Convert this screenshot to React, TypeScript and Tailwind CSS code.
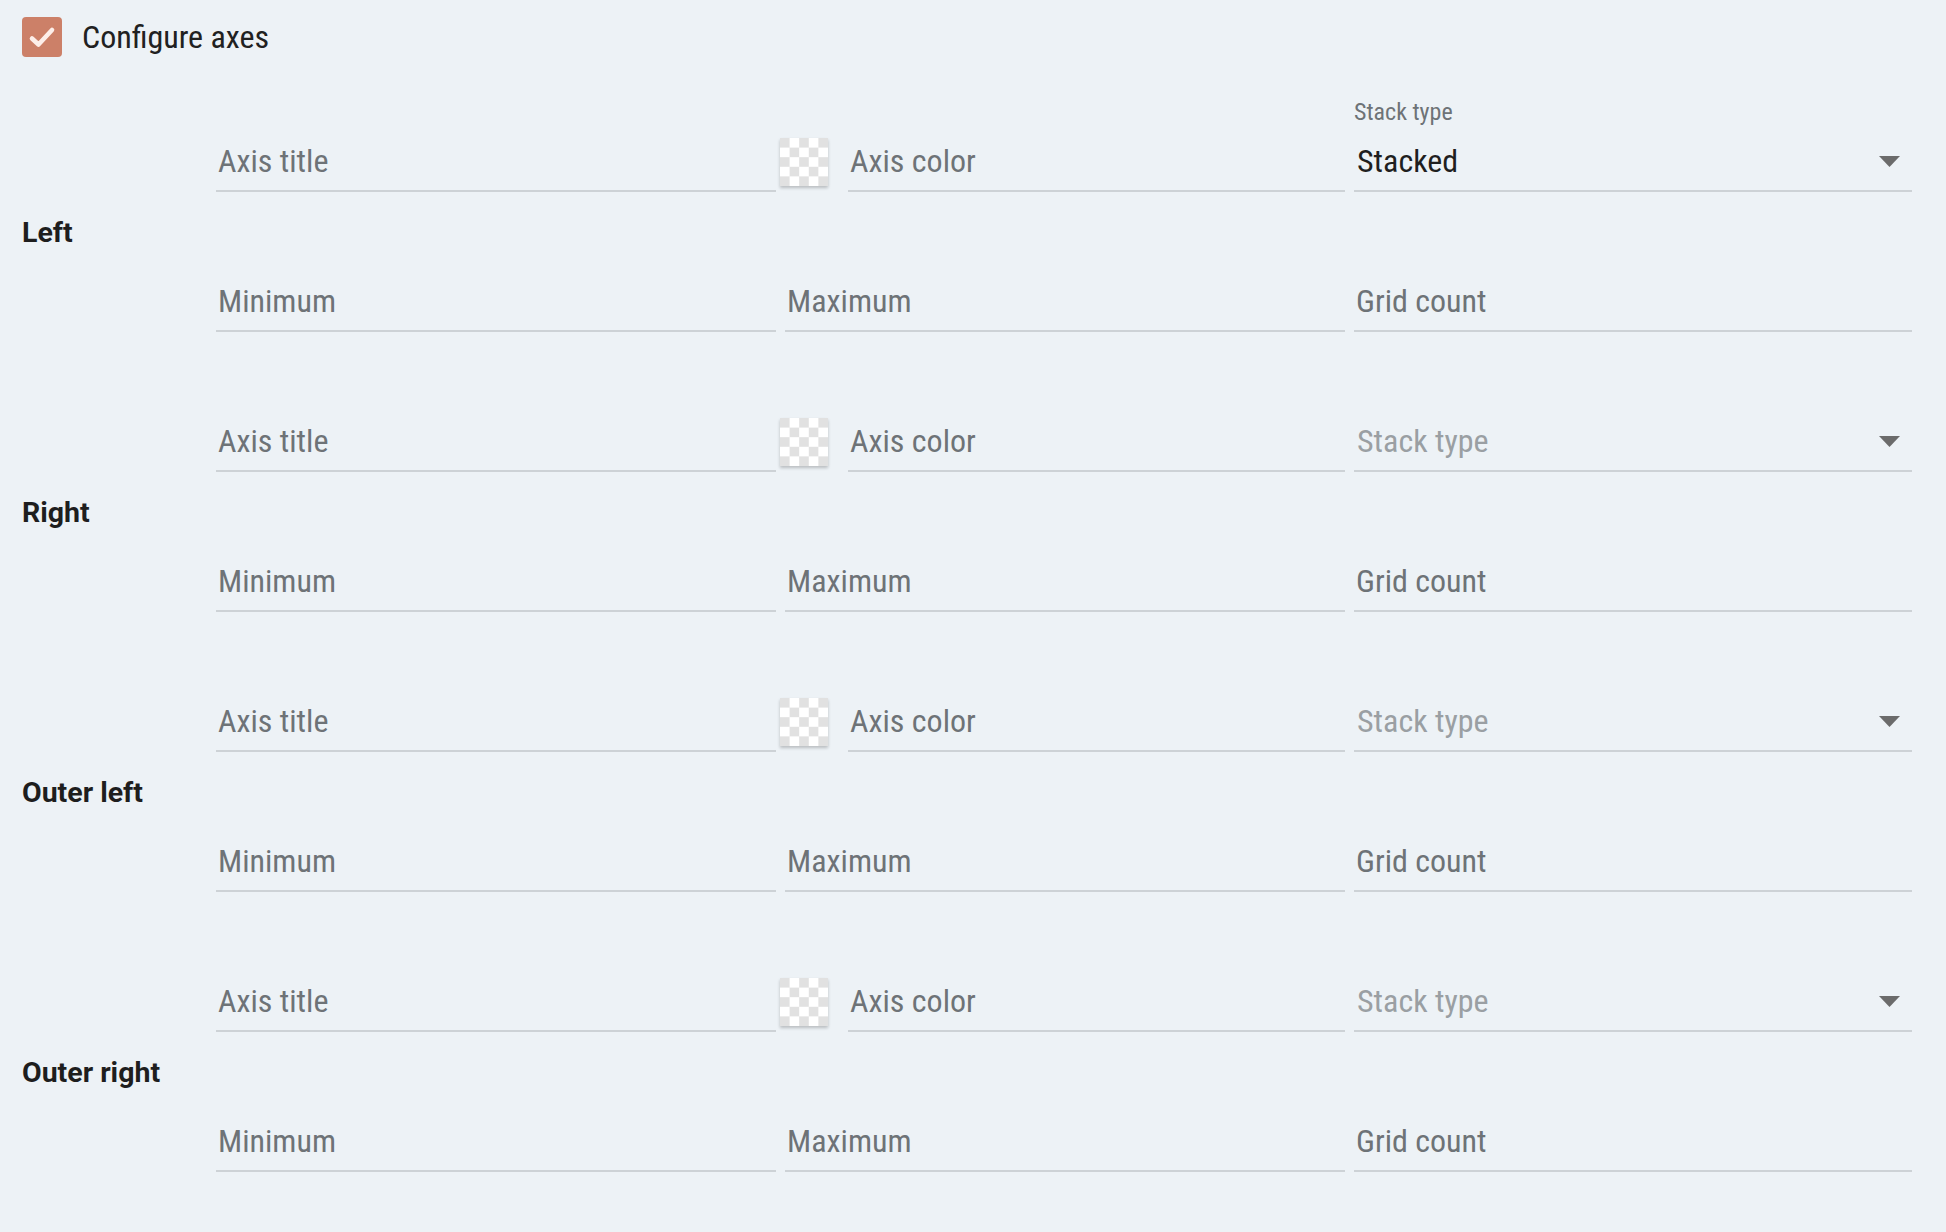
import { useState } from 'react';

type AxisGroup = {
  name: string;
  stackType?: string;
};

const axes: AxisGroup[] = [
  { name: 'Left', stackType: 'Stacked' },
  { name: 'Right' },
  { name: 'Outer left' },
  { name: 'Outer right' },
];

const CheckBox = ({ checked, onToggle }: { checked: boolean; onToggle: () => void }) => (
  <button
    type="button"
    onClick={onToggle}
    className={`flex h-[40px] w-[40px] items-center justify-center rounded-[4px] ${
      checked ? 'bg-[#cc8068]' : 'border-2 border-[#8a8f94] bg-transparent'
    }`}>
    {checked && (
      <svg width="40" height="40" viewBox="0 0 40 40" fill="none">
        <path
          d="M10 21.5l6.5 6L30 13"
          stroke="#fdeee9"
          strokeWidth="4.6"
          strokeLinecap="round"
          strokeLinejoin="round"
        />
      </svg>
    )}
  </button>
);

// underline input, optional floating label above
const Field = ({ placeholder, value, label, muted }: { placeholder: string; value?: string; label?: string; muted?: boolean }) => (
  <div className="flex h-[140px] min-w-0 flex-1 flex-col">
    <div className="h-[28px] pl-[1px] text-[24px] leading-[28px] text-[#6e7377]">{value ? label : ''}</div>
    <div className="flex h-[66px] items-start border-b-2 border-[#cdd2d6] pt-[15px]">
      <span
        className={`pl-[2px] text-[32px] leading-[40px] ${
          value ? 'text-[#1f1f1f]' : muted ? 'text-[#9a9fa3]' : 'text-[#6e7377]'
        }`}>
        {value ?? placeholder}
      </span>
    </div>
  </div>
);

const SelectField = ({ value }: { value?: string }) => (
  <div className="flex h-[140px] min-w-0 flex-col">
    <div className="h-[28px] text-[24px] leading-[28px] text-[#6e7377]">{value ? 'Stack type' : ''}</div>
    <div className="flex h-[66px] items-start border-b-2 border-[#cdd2d6] pt-[15px]">
      <div className="flex h-[40px] flex-1 items-center justify-between pr-[12px]">
        <span className={`pl-[3px] text-[32px] leading-[40px] ${value ? 'text-[#1f1f1f]' : 'text-[#9a9fa3]'}`}>
          {value ?? 'Stack type'}
        </span>
        <svg width="21" height="11" viewBox="0 0 21 11">
          <path d="M0 0h21L10.5 11z" fill="#6b6b6b" />
        </svg>
      </div>
    </div>
  </div>
);

const ColorField = () => (
  <div className="flex h-[140px] min-w-0 flex-col">
    <div className="h-[28px]" />
    <div className="flex h-[66px] items-start">
      <div className="ml-[-5px] mt-[12px] h-[48px] w-[48px] shrink-0 bg-[repeating-conic-gradient(#ffffff_0_25%,#e1e1e1_0_50%)] [background-size:19.2px_19.2px] shadow-[0_2px_3px_rgba(0,0,0,0.22)]" />
      <div className="ml-[20px] flex h-full flex-1 items-start border-b-2 border-[#cdd2d6] pt-[15px]">
        <span className="pl-[2px] text-[32px] leading-[40px] text-[#6e7377]">Axis color</span>
      </div>
    </div>
  </div>
);

const AxisSection = ({ axis }: { axis: AxisGroup }) => (
  <div className="flex">
    <div className="flex w-[194px] shrink-0 items-center pb-[11px]">
      <span className="font-['Roboto',sans-serif] text-[28.5px] font-bold leading-[36px] text-[#1e1e1e] [font-stretch:normal]">
        {axis.name}
      </span>
    </div>
    <div className="grid flex-1 grid-cols-[560px_560px_1fr] gap-x-[9px]">
      <Field placeholder="Axis title" />
      <ColorField />
      <SelectField value={axis.stackType} />
      <Field placeholder="Minimum" />
      <Field placeholder="Maximum" />
      <Field placeholder="Grid count" />
    </div>
  </div>
);

export default function App() {
  const [configure, setConfigure] = useState(true);

  return (
    <div className="min-h-screen bg-[#edf2f6] pl-[22px] pr-[34px] pt-[17px] font-['Roboto_Condensed',Roboto,sans-serif] [font-stretch:condensed]">
      <div className="flex h-[40px] items-center gap-[20px]">
        <CheckBox checked={configure} onToggle={() => setConfigure(!configure)} />
        <span className="text-[32px] leading-[40px] text-[#212121]">Configure axes</span>
      </div>
      <div className="mt-[41px]">
        {axes.map((axis) => (
          <AxisSection key={axis.name} axis={axis} />
        ))}
      </div>
    </div>
  );
}
